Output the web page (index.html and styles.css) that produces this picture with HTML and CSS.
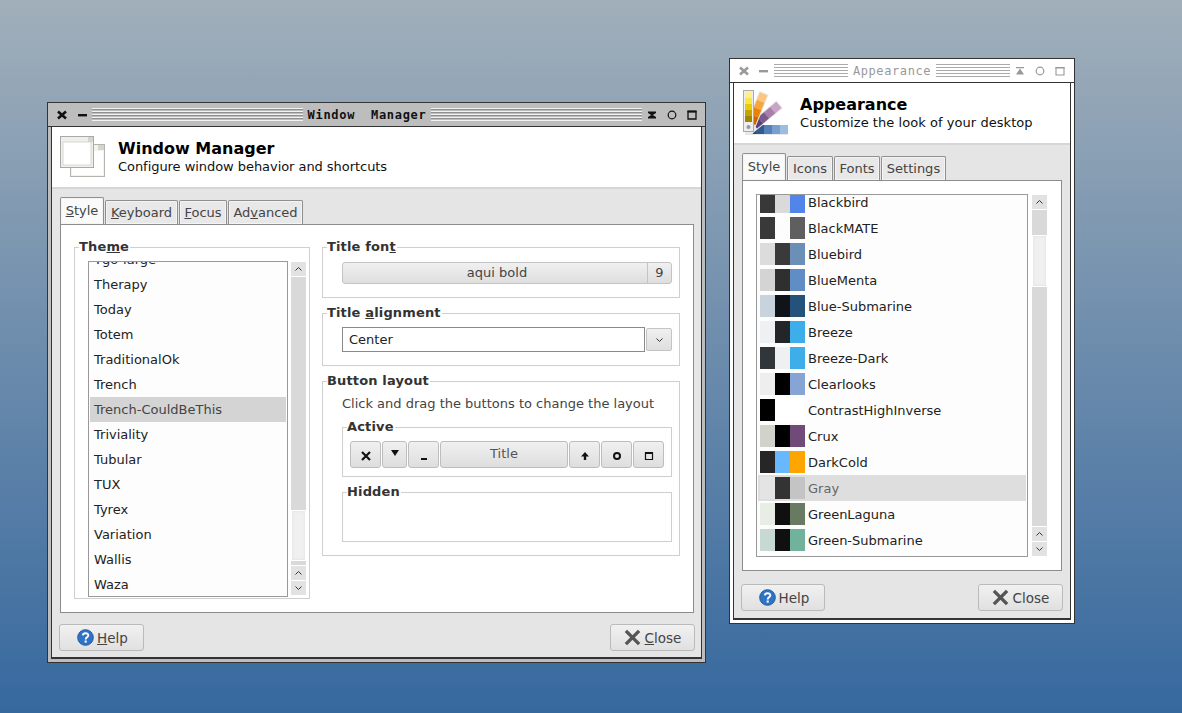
FILE: index.html
```html
<!DOCTYPE html>
<html lang="en">
<head>
    <meta charset="UTF-8">
    <meta name="viewport" content="width=device-width, initial-scale=1.0">
    <title>Window Manager and Appearance</title>
    <link rel="stylesheet" href="styles.css">
</head>
<body>
    <svg class="defs" width="0" height="0">
        <symbol id="tb-close" viewBox="0 0 12 12"><path d="M2 2.500 10 9.500M10 2.500 2 9.500" stroke="currentColor" stroke-width="2.600" fill="none"/></symbol>
        <symbol id="tb-min" viewBox="0 0 12 12"><rect x="1" y="5" width="9" height="2.400" fill="currentColor"/></symbol>
        <symbol id="tb-shade" viewBox="0 0 12 12"><path d="M2 2.500h8V4L6 6.500 2 4zM6 5.500 10 8v1.500H2V8z" fill="currentColor"/></symbol>
        <symbol id="tb-shade-off" viewBox="0 0 12 12"><path d="M2 2h8v1.300H2zM6 3.500 10 9.500H2z" fill="currentColor"/></symbol>
        <symbol id="tb-stick" viewBox="0 0 12 12"><circle cx="6" cy="6" r="3.800" fill="none" stroke="currentColor" stroke-width="1.200"/></symbol>
        <symbol id="tb-max" viewBox="0 0 12 12"><path d="M2 2.500h8v7.500H2z" fill="none" stroke="currentColor" stroke-width="1.300"/><rect x="1.500" y="1.500" width="9" height="2" fill="currentColor"/></symbol>
        <symbol id="tb-max-off" viewBox="0 0 12 12"><path d="M2 2.500h8v7.500H2z" fill="none" stroke="currentColor" stroke-width="1.100"/><rect x="1.500" y="2" width="9" height="1.500" fill="currentColor"/></symbol>
        <symbol id="help" viewBox="0 0 18 18"><circle cx="9" cy="9" r="8.300" fill="#2f73c4" stroke="#1f5ba6"/><path d="M6.200 6.800C6.400 3.800 12 3.700 12 6.700c0 2.200-2.800 2.100-2.800 4.300" fill="none" stroke="#fff" stroke-width="2"/><rect x="8.100" y="12.200" width="2.200" height="2.200" fill="#fff"/></symbol>
        <symbol id="close-x" viewBox="0 0 18 18"><path d="M2 2 16 16M16 2 2 16" stroke="#555" stroke-width="3.600" fill="none"/></symbol>
        <symbol id="sb-up" viewBox="0 0 15 14"><path d="M4.500 8.500 7.500 5.500 10.500 8.500" fill="none" stroke="#333"/></symbol>
        <symbol id="sb-down" viewBox="0 0 15 14"><path d="M4.500 5.500 7.500 8.500 10.500 5.500" fill="none" stroke="#333"/></symbol>
    </svg>

    <!-- window manager -->
    <div class="window wm-window">
        <div class="titlebar">
            <svg class="tb-btn"><use href="#tb-close"/></svg>
            <svg class="tb-btn"><use href="#tb-min"/></svg>
            <div class="handle"></div>
            <span class="tb-title">Window  Manager</span>
            <div class="handle"></div>
            <svg class="tb-btn"><use href="#tb-shade"/></svg>
            <svg class="tb-btn"><use href="#tb-stick"/></svg>
            <svg class="tb-btn"><use href="#tb-max"/></svg>
        </div>
        <div class="client">
            <div class="head">
                <svg class="head-icon" width="46" height="44" viewBox="0 -1 46 44">
                    <rect x="10.500" y="8.500" width="34" height="32" fill="#f3f3f0" stroke="#b4b4ae"/>
                    <rect x="12" y="15" width="31" height="24" fill="#fff"/>
                    <rect x="38" y="9" width="6" height="5" fill="#d5d5d0"/>
                    <rect x="0.500" y="0.500" width="33" height="31" fill="#efefec" stroke="#aaaaa4"/>
                    <rect x="3" y="6" width="28" height="23" fill="#fff" stroke="#d8d8d4"/>
                    <rect x="28" y="1" width="5" height="5" fill="#d5d5d0"/>
                </svg>
                <div>
                    <div class="head-title">Window Manager</div>
                    <div class="head-sub">Configure window behavior and shortcuts</div>
                </div>
            </div>
            <div class="content">
                <div class="tabs">
                    <div class="tab active"><u>S</u>tyle</div>
                    <div class="tab"><u>K</u>eyboard</div>
                    <div class="tab"><u>F</u>ocus</div>
                    <div class="tab">Ad<u>v</u>anced</div>
                </div>
                <div class="panel wm-panel">
                    <fieldset class="frame theme-frame">
                        <legend>The<u>m</u>e</legend>
                        <div class="list-wrap">
                            <div class="list theme-list">
                                <div class="rows">
                                    <div class="row">Ygo-large</div>
                                    <div class="row">Therapy</div>
                                    <div class="row">Today</div>
                                    <div class="row">Totem</div>
                                    <div class="row">TraditionalOk</div>
                                    <div class="row">Trench</div>
                                    <div class="row selected">Trench-CouldBeThis</div>
                                    <div class="row">Triviality</div>
                                    <div class="row">Tubular</div>
                                    <div class="row">TUX</div>
                                    <div class="row">Tyrex</div>
                                    <div class="row">Variation</div>
                                    <div class="row">Wallis</div>
                                    <div class="row">Waza</div>
                                </div>
                            </div>
                            <div class="scrollbar">
                                <svg class="sb-btn"><use href="#sb-up"/></svg>
                                <div class="trough">
                                    <div class="thumb theme-thumb"></div>
                                </div>
                                <svg class="sb-btn"><use href="#sb-up"/></svg>
                                <svg class="sb-btn"><use href="#sb-down"/></svg>
                            </div>
                        </div>
                    </fieldset>
                    <div class="options">
                        <fieldset class="frame">
                            <legend>Title fon<u>t</u></legend>
                            <div class="font-btn">
                                <span class="font-name">aqui bold</span>
                                <span class="font-size">9</span>
                            </div>
                        </fieldset>
                        <fieldset class="frame">
                            <legend>Title <u>a</u>lignment</legend>
                            <div class="combo">
                                <div class="combo-text">Center</div>
                                <div class="combo-btn"><svg width="15" height="14"><use href="#sb-down"/></svg></div>
                            </div>
                        </fieldset>
                        <fieldset class="frame layout-frame">
                            <legend>Button layout</legend>
                            <p class="layout-hint">Click and drag the buttons to change the layout</p>
                            <fieldset class="frame sub-frame">
                                <legend>Active</legend>
                                <div class="layout-btns">
                                    <div class="lb"><svg width="12" height="12" viewBox="0 0 12 12"><path d="M2 2 10 10M10 2 2 10" stroke="#111" stroke-width="2.200"/></svg></div>
                                    <div class="lb narrow"><svg width="12" height="12" viewBox="0 0 12 12" class="lb-up"><path d="M2 3h8L6 9z" fill="#111"/></svg></div>
                                    <div class="lb"><svg width="12" height="12" viewBox="0 0 12 12"><rect x="3" y="8" width="6" height="2" fill="#111"/></svg></div>
                                    <div class="lb title-lb">Title</div>
                                    <div class="lb"><svg width="12" height="12" viewBox="0 0 12 12"><path d="M6 2 10 6.500H7.200V10H4.800V6.500H2z" fill="#111"/></svg></div>
                                    <div class="lb"><svg width="12" height="12" viewBox="0 0 12 12"><circle cx="6" cy="6" r="3" fill="none" stroke="#111" stroke-width="2"/></svg></div>
                                    <div class="lb"><svg width="12" height="12" viewBox="0 0 12 12"><path d="M2.500 2.500h7v7h-7z" fill="none" stroke="#111" stroke-width="1.200"/><rect x="2" y="2" width="8" height="2" fill="#111"/></svg></div>
                                </div>
                            </fieldset>
                            <fieldset class="frame sub-frame hidden-frame">
                                <legend>Hidden</legend>
                            </fieldset>
                        </fieldset>
                    </div>
                </div>
                <div class="footer">
                    <div class="btn"><svg width="17" height="17"><use href="#help"/></svg><span><u>H</u>elp</span></div>
                    <div class="btn"><svg width="17" height="17"><use href="#close-x"/></svg><span><u>C</u>lose</span></div>
                </div>
            </div>
        </div>
    </div>

    <!-- appearance -->
    <div class="window app-window inactive">
        <div class="titlebar">
            <svg class="tb-btn"><use href="#tb-close"/></svg>
            <svg class="tb-btn"><use href="#tb-min"/></svg>
            <div class="handle"></div>
            <span class="tb-title">Appearance</span>
            <div class="handle"></div>
            <svg class="tb-btn"><use href="#tb-shade-off"/></svg>
            <svg class="tb-btn"><use href="#tb-stick"/></svg>
            <svg class="tb-btn"><use href="#tb-max-off"/></svg>
        </div>
        <div class="client">
            <div class="head">
                <svg class="head-icon" width="46" height="46" viewBox="0 0 46 46">
                    <rect x="3" y="40" width="40" height="4" rx="2" fill="#999"/>
                    <g transform="rotate(90 7 40)">
                        <rect x="2" y="0" width="10" height="44" fill="#e8e8e8"/>
                        <rect x="2" y="1" width="9" height="8" fill="#9cbde0"/>
                        <rect x="2" y="9" width="9" height="8" fill="#7a9fcf"/>
                        <rect x="2" y="17" width="9" height="8" fill="#5680b8"/>
                        <rect x="2" y="25" width="9" height="8" fill="#34598f"/>
                        <rect x="2" y="33" width="9" height="5" fill="#254a80"/>
                    </g>
                    <g transform="rotate(50 7 40)">
                        <rect x="2" y="0" width="10" height="42" fill="#e8e8e8"/>
                        <rect x="3" y="1" width="8" height="8" fill="#c9a3c8"/>
                        <rect x="3" y="9" width="8" height="8" fill="#a87fab"/>
                        <rect x="3" y="17" width="8" height="8" fill="#7b5a8c"/>
                        <rect x="3" y="25" width="8" height="8" fill="#5c3f75"/>
                    </g>
                    <g transform="rotate(22 7 40)">
                        <rect x="2" y="0" width="10" height="42" fill="#e8e8e8"/>
                        <rect x="3" y="1" width="8" height="8" fill="#fbc77f"/>
                        <rect x="3" y="9" width="8" height="8" fill="#f6a63f"/>
                        <rect x="3" y="17" width="8" height="8" fill="#e98300"/>
                        <rect x="3" y="25" width="8" height="8" fill="#cc6600"/>
                    </g>
                    <rect x="1.500" y="0.500" width="10" height="41" fill="#eee" stroke="#aaa"/>
                    <rect x="3" y="2" width="7" height="6" fill="#fdf08a"/>
                    <rect x="3" y="8" width="7" height="6" fill="#fbe64a"/>
                    <rect x="3" y="14" width="7" height="6" fill="#e6cc00"/>
                    <rect x="3" y="20" width="7" height="6" fill="#c4a400"/>
                    <rect x="3" y="26" width="7" height="6" fill="#a38600"/>
                    <circle cx="6.500" cy="37" r="2" fill="#999"/>
                </svg>
                <div>
                    <div class="head-title">Appearance</div>
                    <div class="head-sub">Customize the look of your desktop</div>
                </div>
            </div>
            <div class="content">
                <div class="tabs">
                    <div class="tab active">Style</div>
                    <div class="tab">Icons</div>
                    <div class="tab">Fonts</div>
                    <div class="tab">Settings</div>
                </div>
                <div class="panel app-panel">
                    <div class="list style-list">
                        <div class="rows">
                            <div class="row style-row"><i style="background:#383838"></i><i style="background:#dadada"></i><i style="background:#5285ea"></i>Blackbird</div>
                            <div class="row style-row"><i style="background:#393939"></i><i style="background:#fcfcfc"></i><i style="background:#5f5f5f"></i>BlackMATE</div>
                            <div class="row style-row"><i style="background:#dcdcdc"></i><i style="background:#3a3a3a"></i><i style="background:#6c8fb8"></i>Bluebird</div>
                            <div class="row style-row"><i style="background:#d4d4d4"></i><i style="background:#2f2f2f"></i><i style="background:#5f8dc4"></i>BlueMenta</div>
                            <div class="row style-row"><i style="background:#c8d3dd"></i><i style="background:#101418"></i><i style="background:#24527a"></i>Blue-Submarine</div>
                            <div class="row style-row"><i style="background:#eff0f1"></i><i style="background:#232629"></i><i style="background:#3daee9"></i>Breeze</div>
                            <div class="row style-row"><i style="background:#31363b"></i><i style="background:#eff0f1"></i><i style="background:#3daee9"></i>Breeze-Dark</div>
                            <div class="row style-row"><i style="background:#eeeeee"></i><i style="background:#000000"></i><i style="background:#86a4d4"></i>Clearlooks</div>
                            <div class="row style-row"><i style="background:#000000"></i><i style="background:#ffffff"></i><i style="background:#ffffff"></i>ContrastHighInverse</div>
                            <div class="row style-row"><i style="background:#d2d2cc"></i><i style="background:#000000"></i><i style="background:#704a78"></i>Crux</div>
                            <div class="row style-row"><i style="background:#262626"></i><i style="background:#68b8ff"></i><i style="background:#ffa500"></i>DarkCold</div>
                            <div class="row style-row selected"><i style="background:#e4e4e4"></i><i style="background:#333333"></i><i style="background:#c4c4c4"></i>Gray</div>
                            <div class="row style-row"><i style="background:#e8ede6"></i><i style="background:#101010"></i><i style="background:#697a62"></i>GreenLaguna</div>
                            <div class="row style-row"><i style="background:#c8d8d2"></i><i style="background:#101010"></i><i style="background:#70b29c"></i>Green-Submarine</div>
                        </div>
                    </div>
                    <div class="scrollbar">
                        <svg class="sb-btn"><use href="#sb-up"/></svg>
                        <div class="trough">
                            <div class="thumb app-thumb"></div>
                        </div>
                        <svg class="sb-btn"><use href="#sb-up"/></svg>
                        <svg class="sb-btn"><use href="#sb-down"/></svg>
                    </div>
                </div>
                <div class="footer">
                    <div class="btn"><svg width="17" height="17"><use href="#help"/></svg><span>Help</span></div>
                    <div class="btn"><svg width="17" height="17"><use href="#close-x"/></svg><span>Close</span></div>
                </div>
            </div>
        </div>
    </div>
</body>
</html>
```

FILE: styles.css
```css
html, body { margin: 0; height: 100%; }
body {
    height: 713px;
    overflow: hidden;
    position: relative;
    font-family: "DejaVu Sans", sans-serif;
    font-size: 13px;
    color: #222;
    background: linear-gradient(#a1afba, #36689e);
}
.defs { position: absolute; }
div, fieldset { box-sizing: border-box; }

/* window frame */
.window { position: absolute; display: flex; flex-direction: column; background: #bdbdbd; border: 1px solid #333; }
.wm-window { left: 47px; top: 102px; width: 659px; height: 561px; }
.app-window { left: 729px; top: 58px; width: 346px; height: 566px; background: #fff; }
.titlebar { display: flex; align-items: center; height: 24px; flex: none; padding: 0 7px 0 8px; color: #111; border-bottom: 1px solid #333; }
.tb-btn { width: 12px; height: 12px; flex: none; margin-right: 8px; }
.tb-btn:last-child { margin-right: 0; }
.tb-btn:nth-child(1) { margin-right: 9px; }
.tb-btn:nth-child(2) { margin-right: 3px; }
.handle { flex: 1; height: 13px; background: repeating-linear-gradient(#f2f2f2 0 1px, #8f8f8f 1px 2px, #bdbdbd 2px 3px); }
.handle:nth-last-child(4) { margin-right: 4px; }
.tb-title { font-family: "DejaVu Sans Mono", monospace; font-weight: bold; font-size: 12px; letter-spacing: .7px; white-space: pre; margin: 1px 5px 0; }

.app-window .titlebar { color: #999; padding-right: 8px; }
.app-window .tb-btn:nth-child(1) { margin-right: 8px; }
.app-window .tb-btn:nth-child(2) { margin-right: 4px; }
.app-window .handle { background: repeating-linear-gradient(#aaa 0 1px, #fff 1px 3px); }
.app-window .tb-title { letter-spacing: .6px; font-weight: normal; }

.client { flex: 1; display: flex; flex-direction: column; margin: 0 3px 3px; border: solid #333; border-width: 0 1px 2px; background: #e5e5e5; min-height: 0; }

/* header */
.head { height: 62px; flex: none; display: flex; align-items: center; gap: 12px; padding-left: 8px; background: #fff; border-bottom: 2px solid #d6d6d6; }
.head-title { font-size: 16px; font-weight: bold; color: #000; line-height: 19px; }
.head-sub { color: #111; line-height: 17px; letter-spacing: -.05px; }
.app-window .head-sub { letter-spacing: .05px; }

/* notebook */
.content { flex: 1; display: flex; flex-direction: column; padding: 8px 7px 0 8px; min-height: 0; }
.app-window .content { padding-right: 8px; }
.tabs { display: flex; align-items: flex-end; gap: 1px; height: 27px; flex: none; }
.tab { height: 24px; text-align: center; line-height: 23px; background: #e8e8e8; color: #444; border: 1px solid #8f8f8f; border-bottom: 0; border-radius: 2px 2px 0 0; box-shadow: inset 0 0 0 1px #f4f4f4; }
.tab.active { height: 27px; background: #fafafa; line-height: 25px; }
.wm-window .tab:nth-child(1) { width: 44px; }
.wm-window .tab:nth-child(2) { width: 73px; }
.wm-window .tab:nth-child(3) { width: 48px; }
.wm-window .tab:nth-child(4) { width: 75px; }
.app-window .tab:nth-child(1) { width: 44px; }
.app-window .tab:nth-child(2) { width: 46px; }
.app-window .tab:nth-child(3) { width: 46px; }
.app-window .tab:nth-child(4) { width: 65px; }
.panel { background: #fff; border: 1px solid #8c8c8c; }
.wm-panel { height: 389px; display: flex; gap: 12px; padding: 14px 13px 0; }
.app-panel { height: 391px; display: flex; gap: 4px; padding: 13px 14px 0 13px; }

/* frames */
.frame { margin: 0; padding: 7px 7px 0 19px; border: 1px solid #cfcfcf; min-width: 0; }
.frame legend { padding: 0 1px 0 0; font-weight: bold; color: #333; line-height: 16px; font-size: 13px; letter-spacing: .15px; }
.theme-frame { width: 236px; height: 360px; padding: 6px 3px 0 13px; flex: none; }
.theme-frame > legend { margin-left: -9px; }
.options { width: 358px; display: flex; flex-direction: column; gap: 7px; }
.options > .frame > legend { margin-left: -15px; }
.options > .frame { height: 59px; }
.options > .frame:nth-child(2) { height: 61px; padding-top: 6px; }
.options > .layout-frame { height: 183px; padding-top: 0; }

/* lists */
.list-wrap { display: flex; gap: 3px; }
.list { background: #fdfdfd; border: 1px solid #999; overflow: hidden; }
.theme-list { width: 201px; height: 336px; padding: 0 1px; }
.theme-list .rows { margin-top: -15px; }
.row { height: 25px; line-height: 25px; padding-left: 4px; color: #222; white-space: nowrap; }
.row.selected { background: #d4d4d4; color: #444; }
.style-list { width: 272px; height: 363px; padding: 0 1px; }
.style-list .rows { margin-top: -6px; }
.style-row { height: 26px; line-height: 25px; display: flex; align-items: center; padding-left: 2px; }
.style-row i { width: 15px; height: 22px; flex: none; }
.style-row i:nth-child(3) { margin-right: 3px; }
.style-row.selected { background: #dedede; color: #666; }

/* scrollbars */
.scrollbar { width: 15px; display: flex; flex-direction: column; align-items: stretch; padding-top: 1px; }
.sb-btn { display: block; width: 15px; height: 14px; flex: none; background: #e2e2e2; margin-bottom: 1px; }
.sb-btn:last-child { margin-bottom: 0; }
.trough { flex: 1; background: #d9d9d9; position: relative; margin-bottom: 1px; }
.thumb { position: absolute; left: 0; right: 0; background: #f0f0f0; border: 1px solid #fff; box-shadow: inset 0 0 3px #ddd; }
.theme-thumb { top: 233px; height: 51px; }
.theme-list + .scrollbar { height: 334px; }
.app-thumb { top: 25px; height: 52px; }
.style-list + .scrollbar { height: 362px; }

/* font button and combo */
.font-btn { display: flex; height: 22px; line-height: 20px; color: #444; background: linear-gradient(#f0f0f0, #dedede); border: 1px solid #c4c4c4; border-radius: 3px; }
.font-name { flex: 1; text-align: center; padding-left: 4px; border-right: 1px solid #c4c4c4; }
.font-size { width: 23px; text-align: center; }
.combo { display: flex; height: 25px; gap: 1px; }
.combo-text { flex: 1; line-height: 23px; padding-left: 6px; background: #fff; border: 1px solid #8a8a8a; color: #222; }
.combo-btn { width: 26px; height: 23px; margin-top: 1px; display: flex; align-items: center; justify-content: center; background: linear-gradient(#f0f0f0, #dedede); border: 1px solid #c4c4c4; border-radius: 2px; }

/* button layout */
.layout-hint { margin: 0 0 7px; line-height: 17px; color: #444; padding-top: 6px; height: 17px; box-sizing: content-box; }
.layout-frame > .sub-frame { width: 330px; height: 58px; padding: 6px 7px 0; }
.sub-frame > legend { margin-left: -3px; }
.layout-frame > .hidden-frame { margin-top: 7px; height: 58px; }
.layout-btns { display: flex; gap: 1px; }
.lb { width: 31px; height: 27px; flex: none; display: flex; align-items: center; justify-content: center; background: linear-gradient(#f0f0f0, #dedede); border: 1px solid #bdbdbd; border-radius: 3px; color: #555; }
.lb svg { margin-top: 2px; }
.lb.narrow { width: 25px; }
.lb svg.lb-up { margin-top: -4px; }
.title-lb { flex: 1; padding-bottom: 3px; }

/* dialog buttons */
.footer { display: flex; justify-content: space-between; align-items: flex-start; flex: 1; margin: 0 -1px; padding-top: 11px; }
.app-window .footer { padding-top: 13px; }
.btn { display: flex; align-items: center; justify-content: center; gap: 4px; width: 85px; height: 27px; color: #444; font-size: 13.5px; background: linear-gradient(#f1f1f1, #e0e0e0); border: 1px solid #bababa; border-radius: 3px; }
.btn:first-child { padding-left: 2px; }
.btn:first-child span { margin-left: -1px; }
.app-window .btn:first-child { width: 84px; }
```
